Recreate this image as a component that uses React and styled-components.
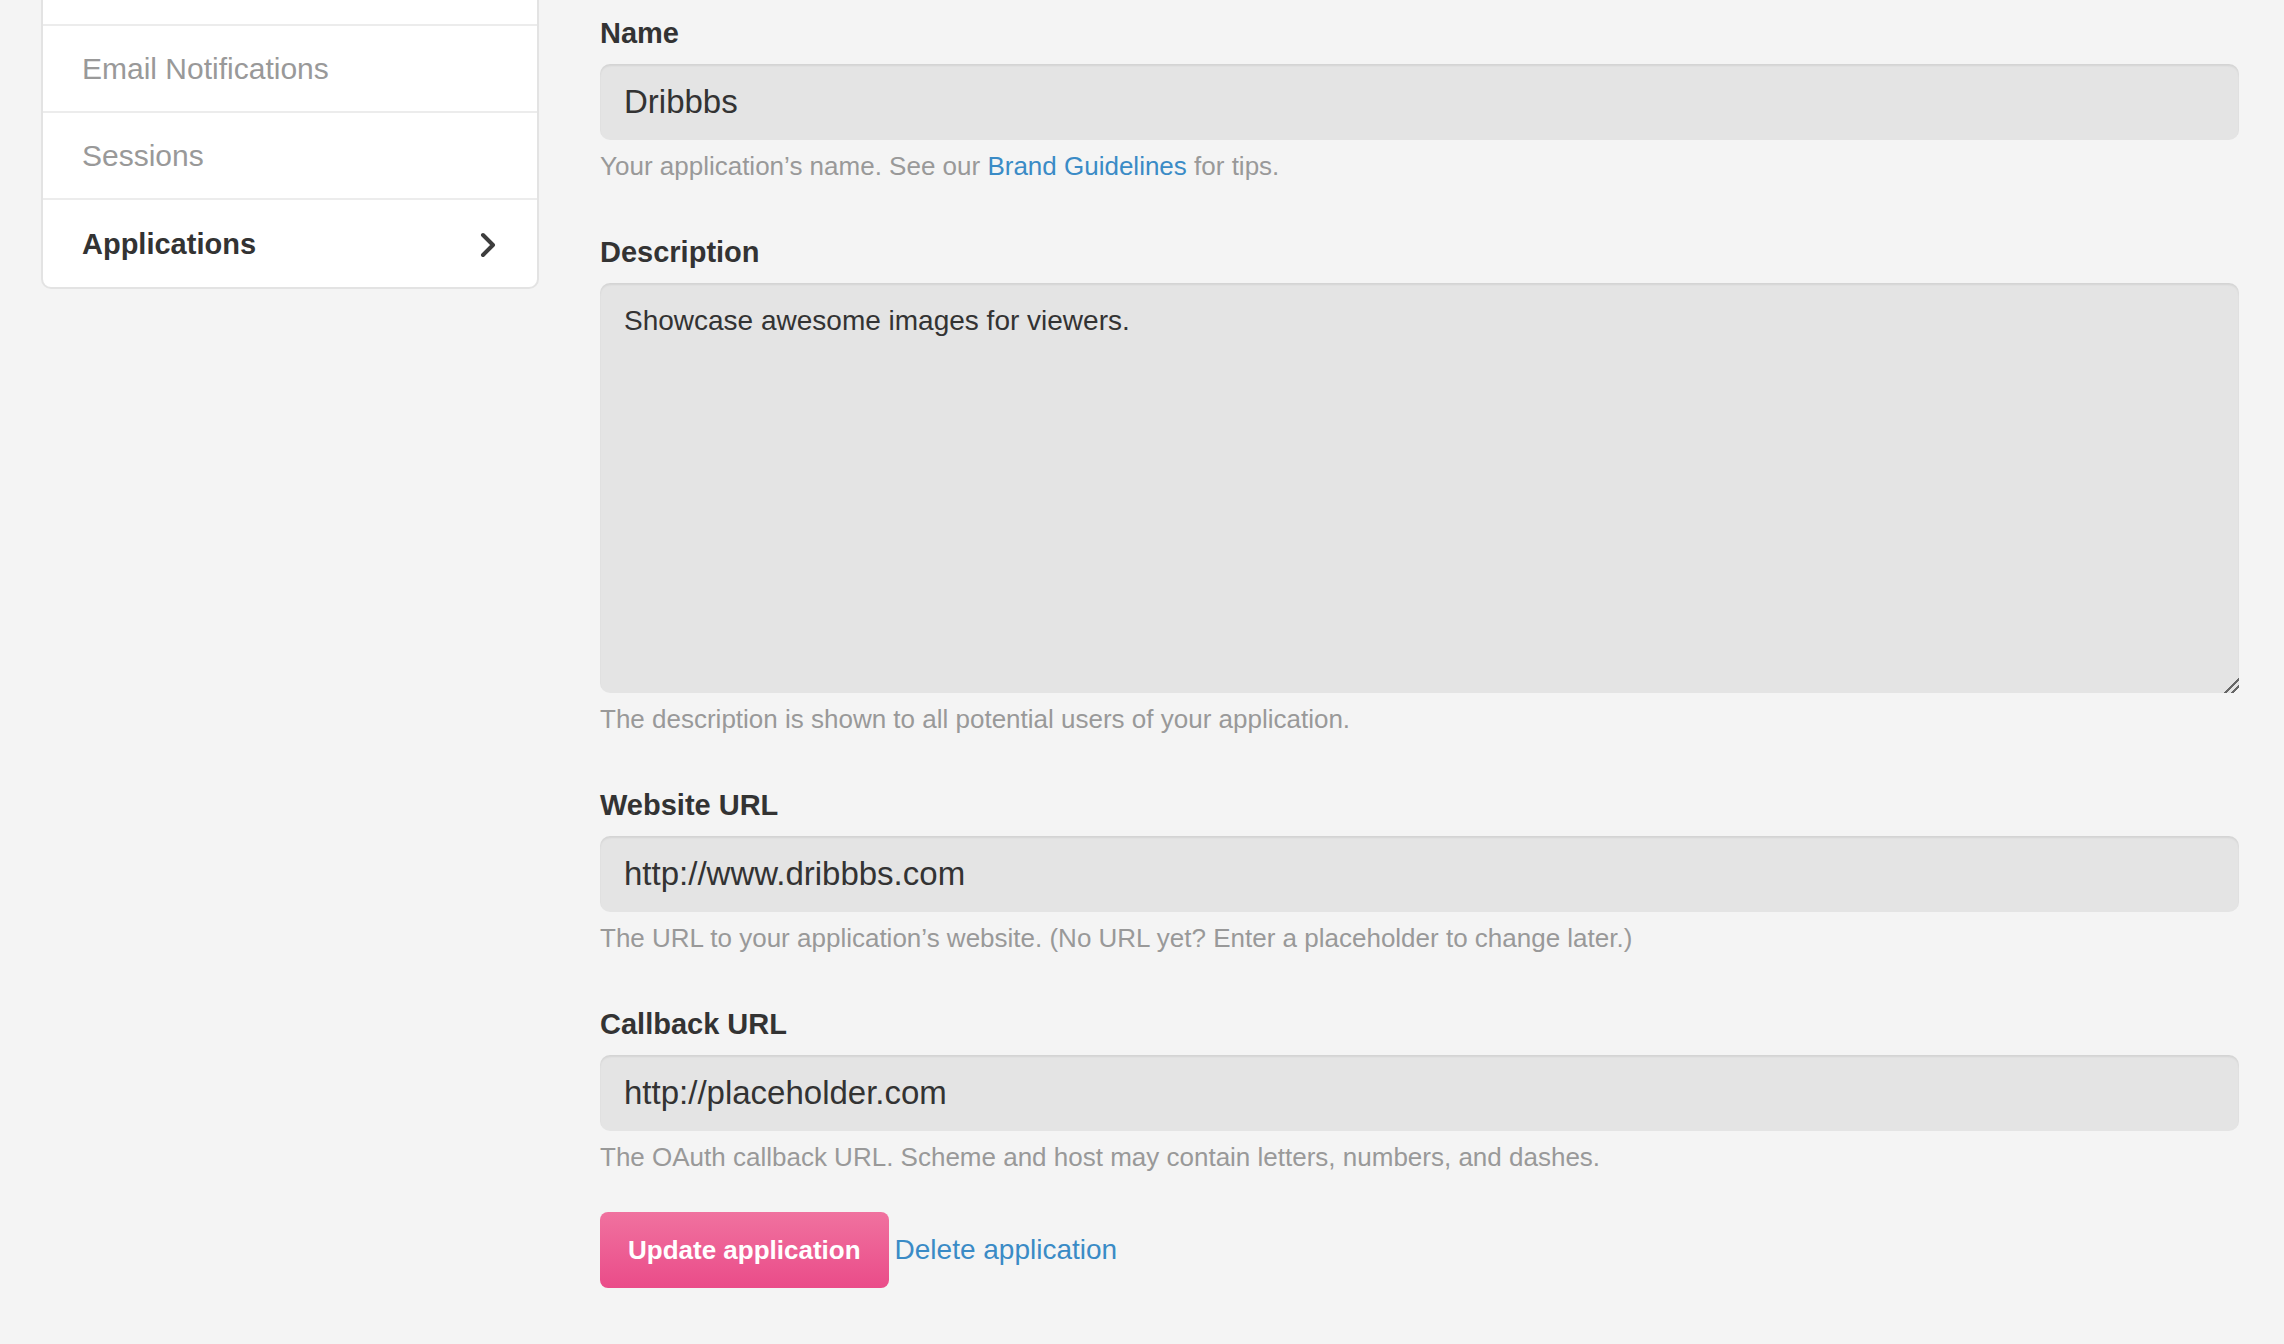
import React from "react";
import styled, { createGlobalStyle } from "styled-components";

const GlobalStyle = createGlobalStyle`
  body {
    margin: 0;
    background: #f4f4f4;
    font-family: "Liberation Sans", Arial, Helvetica, sans-serif;
    color: #333;
  }
`;

const navItems = [
  { label: "Email Notifications" },
  { label: "Sessions" },
  { label: "Applications", active: true },
];

const Chevron = () => (
  <svg width="18" height="26" viewBox="0 0 18 26">
    <polyline
      points="4,3 14,13 4,23"
      fill="none"
      stroke="#3d3d3d"
      strokeWidth="4"
      strokeLinecap="round"
      strokeLinejoin="round"
    />
  </svg>
);

const App = () => {
  // form fields, built here so the styled Link below is already defined
  const fields = [
    {
      label: "Name",
      value: "Dribbbs",
      help: (
        <>
          Your application’s name. See our <Link href="#">Brand Guidelines</Link> for tips.
        </>
      ),
    },
    {
      label: "Description",
      value: "Showcase awesome images for viewers.",
      multiline: true,
      help: "The description is shown to all potential users of your application.",
    },
    {
      label: "Website URL",
      value: "http://www.dribbbs.com",
      help: "The URL to your application’s website. (No URL yet? Enter a placeholder to change later.)",
    },
    {
      label: "Callback URL",
      value: "http://placeholder.com",
      help: "The OAuth callback URL. Scheme and host may contain letters, numbers, and dashes.",
    },
  ];

  return (
    <>
      <GlobalStyle />
      <Page>
        <Sidebar>
          <CutRow />
          {navItems.map((item, i) => (
            <NavRow key={item.label} $active={item.active} $last={i === navItems.length - 1}>
              {item.label}
              {item.active && <Chevron />}
            </NavRow>
          ))}
        </Sidebar>

        <Main>
          {fields.map((f) => (
            <Field key={f.label}>
              <Label>{f.label}</Label>
              {f.multiline ? (
                <TextArea defaultValue={f.value} />
              ) : (
                <Input defaultValue={f.value} />
              )}
              <Help>{f.help}</Help>
            </Field>
          ))}
          <Actions>
            <Button>Update application</Button>
            <Link href="#">Delete application</Link>
          </Actions>
        </Main>
      </Page>
    </>
  );
};

//styling
const Page = styled.div`
  display: flex;
  align-items: flex-start;
  gap: 61px;
  padding: 0 45px 40px 41px;
`;
const Sidebar = styled.nav`
  width: 498px;
  flex-shrink: 0;
  box-sizing: border-box;
  background: #fff;
  border: 2px solid #e3e3e3;
  border-top: none;
  border-radius: 0 0 10px 10px;
  display: flex;
  flex-direction: column;
`;
const CutRow = styled.div`
  height: 24px;
  border-bottom: 2px solid #ececec;
`;
const NavRow = styled.a`
  height: 87px;
  padding-top: ${(p) => (p.$last ? "2px" : "0")};
  box-sizing: border-box;
  display: flex;
  align-items: center;
  justify-content: space-between;
  padding-left: 39px;
  padding-right: 40px;
  font-size: ${(p) => (p.$active ? "29px" : "30px")};
  font-weight: ${(p) => (p.$active ? 700 : 400)};
  color: ${(p) => (p.$active ? "#333" : "#999")};
  border-bottom: ${(p) => (p.$last ? "none" : "2px solid #ececec")};
  cursor: pointer;
`;
const Main = styled.div`
  flex: 1;
  padding-top: 12px;
  display: flex;
  flex-direction: column;
`;
const Field = styled.div`
  display: flex;
  flex-direction: column;
  margin-bottom: 47px;
`;
const Label = styled.label`
  font-size: 29px;
  font-weight: 700;
  line-height: 42px;
  color: #333;
  margin-bottom: 10px;
`;
const Input = styled.input`
  height: 76px;
  box-sizing: border-box;
  border: none;
  border-radius: 10px;
  background: #e4e4e4;
  box-shadow: inset 0 2px 2px rgba(0, 0, 0, 0.07);
  padding: 0 24px;
  font-family: inherit;
  font-size: 33px;
  color: #333;
  outline: none;
`;
const TextArea = styled.textarea`
  height: 410px;
  box-sizing: border-box;
  border: none;
  border-radius: 10px;
  background: #e4e4e4;
  box-shadow: inset 0 2px 2px rgba(0, 0, 0, 0.07);
  padding: 19px 24px;
  font-family: inherit;
  font-size: 28px;
  line-height: 38px;
  color: #333;
  outline: none;
  resize: vertical;

  &::-webkit-resizer {
    background: linear-gradient(
      135deg,
      transparent 48%,
      #666 48%,
      #666 58%,
      transparent 58%,
      transparent 72%,
      #666 72%,
      #666 82%,
      transparent 82%
    );
  }
`;
const Help = styled.p`
  margin: 8px 0 0;
  font-size: 26px;
  line-height: 36px;
  color: #999;
`;
const Link = styled.a`
  color: #3a8bc6;
  text-decoration: none;
  font-size: inherit;
`;
const Actions = styled.div`
  margin-top: -10px;
  display: flex;
  align-items: center;
  gap: 6px;
  font-size: 28px;
`;
const Button = styled.button`
  height: 76px;
  padding: 0 28px;
  border: none;
  border-radius: 8px;
  background: linear-gradient(#f0729f, #ea4c89);
  color: #fff;
  font-family: inherit;
  font-size: 26px;
  font-weight: 700;
  cursor: pointer;
`;

export default App;
